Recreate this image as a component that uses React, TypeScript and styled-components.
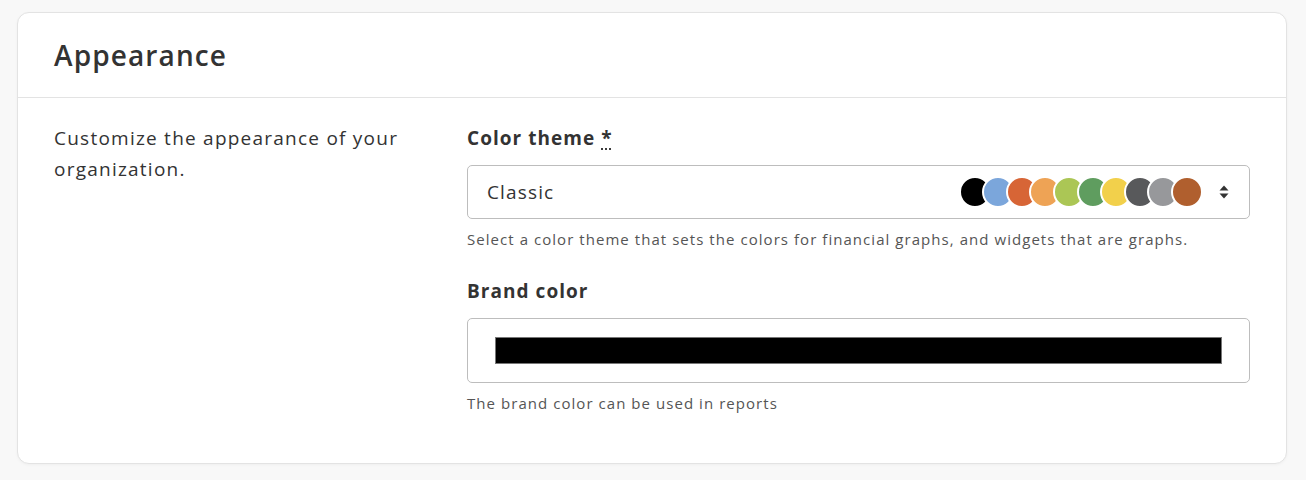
import React from "react";
import styled, { createGlobalStyle } from "styled-components";

const Global = createGlobalStyle`
  html, body { margin: 0; padding: 0; background: #f8f8f8; }
  body { font-family: "Open Sans", "Noto Sans", sans-serif; color: #333; }
`;

const Page = styled.div`
  padding: 12px 19px 16px 17px;
`;

const Card = styled.section`
  background: #fff;
  border: 1px solid #e3e3e3;
  border-radius: 12px;
  box-shadow: 0 1px 3px rgba(0,0,0,0.04);
`;

const Header = styled.header`
  height: 84px;
  display: flex;
  align-items: center;
  padding: 0 36px;
  border-bottom: 1px solid #e3e3e3;
`;

const Title = styled.h2`
  margin: 0;
  font-size: 28px;
  font-weight: 600;
  letter-spacing: 0.04em;
  color: #333;
`;

const Body = styled.div`
  display: grid;
  grid-template-columns: 413px 1fr;
  padding: 25px 36px 50px 36px;
`;

const Intro = styled.p`
  margin: 0;
  font-size: 19px;
  line-height: 31px;
  letter-spacing: 0.065em;
  color: #333;
  width: 370px;
`;

const Fields = styled.div`
  display: flex;
  flex-direction: column;
`;

const Field = styled.div<{ $gap?: number }>`
  display: flex;
  flex-direction: column;
  margin-bottom: ${(p) => p.$gap ?? 0}px;
`;

const Label = styled.label`
  font-size: 19px;
  font-weight: 700;
  color: #333;
  line-height: 30px;
  letter-spacing: 0.055em;
  margin-bottom: 12px;
`;

const Req = styled.abbr`
  text-decoration: underline dotted;
  text-underline-offset: 4px;
  font-weight: 700;
`;

const Select = styled.div`
  height: 52px;
  border: 1px solid #bdbdbd;
  border-radius: 5px;
  display: flex;
  align-items: center;
  padding: 0 19px 0 19px;
`;

const SelectValue = styled.span`
  flex: 1;
  font-size: 19px;
  letter-spacing: 0.06em;
  color: #333;
`;

const Swatches = styled.div`
  display: flex;
  margin-right: 15px;
`;

const Swatch = styled.span<{ $c: string }>`
  box-sizing: border-box;
  width: 32px;
  height: 32px;
  border-radius: 50%;
  background: ${(p) => p.$c};
  border: 2px solid #fff;
  margin-left: -8.4px;
  &:first-child { margin-left: 0; }
`;

const Help = styled.div`
  font-size: 15px;
  color: #555;
  margin-top: 10px;
  line-height: 20px;
  letter-spacing: 0.07em;
`;

const ColorBox = styled.div`
  height: 63px;
  border: 1px solid #bdbdbd;
  border-radius: 5px;
  display: flex;
  align-items: center;
  padding: 0 27px;
`;

const ColorBar = styled.div`
  flex: 1;
  height: 25px;
  background: #000;
  border: 1px solid #777;
`;

const colors = [
  "#000000",
  "#7ba6db",
  "#d76536",
  "#eea355",
  "#abc655",
  "#5f9d5f",
  "#f2d04b",
  "#58595b",
  "#97989b",
  "#b05f2e",
];

export default function App() {
  return (
    <>
      <Global />
      <Page>
        <Card>
          <Header>
            <Title>Appearance</Title>
          </Header>
          <Body>
            <Intro>Customize the appearance of your organization.</Intro>
            <Fields>
              <Field $gap={27}>
                <Label>
                  Color theme <Req title="required">*</Req>
                </Label>
                <Select>
                  <SelectValue>Classic</SelectValue>
                  <Swatches>
                    {colors.map((c) => (
                      <Swatch key={c} $c={c} />
                    ))}
                  </Swatches>
                  <svg width="12" height="16" viewBox="0 0 12 16">
                    <path d="M6 1.5 L10.5 6.5 H1.5 Z" fill="#333" />
                    <path d="M6 14.5 L10.5 9.5 H1.5 Z" fill="#333" />
                  </svg>
                </Select>
                <Help>
                  Select a color theme that sets the colors for financial graphs, and widgets that are graphs.
                </Help>
              </Field>
              <Field>
                <Label>Brand color</Label>
                <ColorBox>
                  <ColorBar />
                </ColorBox>
                <Help>The brand color can be used in reports</Help>
              </Field>
            </Fields>
          </Body>
        </Card>
      </Page>
    </>
  );
}
